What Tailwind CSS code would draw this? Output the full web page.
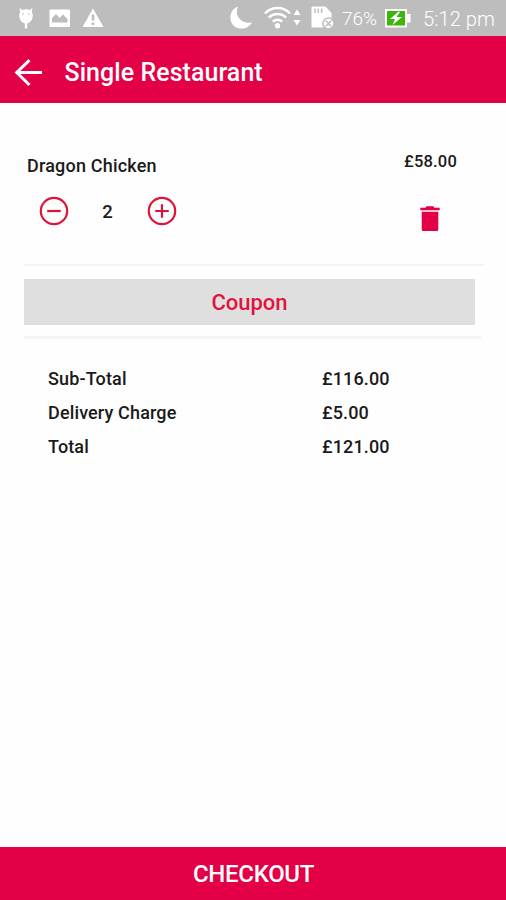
<!DOCTYPE html>
<html lang="en">
<head>
<meta charset="utf-8">
<title>Single Restaurant</title>
<script src="https://cdn.jsdelivr.net/npm/@tailwindcss/browser@4"></script>
</head>
<body class="bg-white">
<div class="flex h-[900px] w-[506px] flex-col overflow-hidden bg-[#fefefe] font-['Roboto',sans-serif] font-medium text-[#1a1a1a] whitespace-nowrap">
  <!-- status bar -->
  <div class="flex h-9 shrink-0 items-center bg-[#bdbdbd] pl-[18px] text-white">
    <svg class="h-9 w-4 shrink-0" viewBox="0 0 16 36" fill="#fff"><path d="M1.500 7.500L4 10Q8 8.500 12 10L14.500 7.500L13.800 12Q15.500 15 14.500 18Q13 22.500 9.200 23.500V28.500H6.800V23.500Q3 22.500 1.500 18Q.5 15 2.200 12Z"/><circle cx="5.200" cy="14" r=".8" fill="#bdbdbd"/><circle cx="10.800" cy="14" r=".8" fill="#bdbdbd"/></svg>
    <svg class="ml-[15px] h-9 w-[22px] shrink-0" viewBox="0 0 22 36"><rect x=".5" y="9.500" width="20.500" height="17.500" rx="1" fill="#fff"/><path d="M3 22.500V18L7 14L10.500 18L14 14.500L18.500 19V22.500Z" fill="#bdbdbd"/></svg>
    <svg class="ml-[11px] h-9 w-[22px] shrink-0" viewBox="0 0 22 36"><path d="M11 8.500L21.500 27H.5Z" fill="#fff"/><path d="M11 14.500V20.500M11 22.500V25" stroke="#bdbdbd" stroke-width="2.600"/></svg>
    <svg class="ml-[125px] h-9 w-6 shrink-0" viewBox="0 0 24 36"><path d="M9 6.500C5 14 11 24.500 23 22.500C20 28 12.500 30.500 6.500 27C-1 22.500-.5 10 9 6.500Z" fill="#fff"/></svg>
    <svg class="ml-[11px] h-9 w-[38px] shrink-0" viewBox="0 0 38 36" fill="none" stroke="#fff" stroke-width="2.500"><path d="M1 13.500A17.200 17.200 0 0 1 26 13.500M4.900 17.700A11.700 11.700 0 0 1 22.100 17.700M8.800 21.700A6.500 6.500 0 0 1 18.200 21.700"/><circle cx="13.500" cy="25.800" r="2.700" fill="#fff" stroke="none"/><path d="M33 9.500L36.500 15H29.500ZM33 25.500L36.500 20H29.500Z" fill="#fff" stroke="none"/></svg>
    <svg class="ml-[9px] h-9 w-6 shrink-0" viewBox="0 0 24 36"><path d="M1.500 6.500H14.500L20.500 13V27.500H.5V7.500Z" fill="#fff"/><path d="M4 8.500V13M7.300 8.500V13M10.600 8.500V13" stroke="#bdbdbd" stroke-width="1.500"/><circle cx="17.500" cy="23.500" r="5.500" fill="#fff" stroke="#bdbdbd" stroke-width="1.500"/><path d="M14.800 20.800L20.200 26.200M20.200 20.800L14.800 26.200" stroke="#bdbdbd" stroke-width="1.600"/></svg>
    <span class="ml-[7px] w-[37px] pt-[2px] text-[19px] leading-[34px] font-light">76%</span>
    <svg class="ml-[6px] h-9 w-[27px] shrink-0" viewBox="0 0 27 36"><path d="M0 9H22V14H25.500V22.500H22V27.500H0Z" fill="#fff"/><rect x="2" y="11" width="18" height="14.500" fill="#3eb50b"/><path d="M13.500 11.500L5 19H10L7.500 25L17 17H11.500L15 12Z" fill="#fff"/></svg>
    <span class="ml-[11px] pt-[2px] text-[20.200px] leading-[34px] font-light">5:12 pm</span>
  </div>

  <!-- app bar -->
  <header class="flex h-[66.500px] shrink-0 items-center bg-[#e40046] pl-[14px] text-white">
    <svg class="mt-[8px] h-7 w-7 shrink-0" viewBox="0 0 28 28" fill="none" stroke="#fff" stroke-width="3"><path d="M28 13.500H2.500M15.500 1.200L2.700 13.500L15.500 26"/></svg>
    <h1 class="ml-[22.500px] pt-[8px] text-[25px] leading-[30px] tracking-[0.050px]">Single Restaurant</h1>
  </header>

  <main class="flex flex-1 flex-col">
    <section class="mx-6 mt-[46px] h-[115.500px]">
      <div class="flex justify-between pr-[25px] pl-[3px]">
        <span class="pt-[5px] text-[18px] leading-6 tracking-[0.200px]">Dragon Chicken</span>
        <span class="pt-px text-[16.500px] leading-6 tracking-[0.200px]">£58.00</span>
      </div>
      <div class="mt-[13px] flex items-center pl-[15px]">
        <svg class="h-[30px] w-[30px]" viewBox="0 0 30 30" fill="none" stroke="#dc1538" stroke-width="2.200"><circle cx="15" cy="15" r="13.200"/><path d="M8.200 15H21.800"/></svg>
        <span class="w-[77px] pt-[2px] text-center text-[18.500px] leading-6">2</span>
        <svg class="ml-px h-[30px] w-[30px]" viewBox="0 0 30 30" fill="none" stroke="#dc1538" stroke-width="2.200"><circle cx="15" cy="15" r="13.200"/><path d="M8.200 15H21.800M15 8.200V21.800"/></svg>
        <svg class="mt-[15px] ml-[243px] h-[26px] w-5" viewBox="0 0 20 26" fill="#e40046"><path d="M.3 1.700H5.500L6.500.3H13.500L14.500 1.700H19.700V4.200H.3ZM1.700 5.700H18.300V23.500Q18.300 25 16.800 25H3.200Q1.700 25 1.700 23.500Z"/></svg>
      </div>
    </section>
    <div class="ml-6 h-[2px] w-[460px] bg-[#f4f4f4]"></div>
    <button class="mt-[13px] ml-6 h-[45.500px] w-[451px] bg-[#dfdfdf] pt-px text-[22px] leading-[46px] font-medium text-[#e01440]">Coupon</button>
    <div class="mt-[11.500px] ml-6 h-[3px] w-[458px] bg-[#f6f6f6]"></div>

    <dl class="mt-[22.500px] ml-12 grid grid-cols-[274px_auto] text-[18px] leading-[34px] tracking-[0.140px]">
      <dt>Sub-Total</dt><dd>£116.00</dd>
      <dt>Delivery Charge</dt><dd>£5.00</dd>
      <dt>Total</dt><dd>£121.00</dd>
    </dl>
  </main>

  <button class="h-[53.500px] shrink-0 bg-[#e40046] pt-[2px] pl-px text-[24px] leading-[50px] font-medium tracking-[-0.300px] text-white">CHECKOUT</button>
</div>
</body>
</html>
